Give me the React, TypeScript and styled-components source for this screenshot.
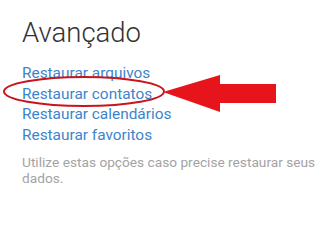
import styled, { createGlobalStyle } from "styled-components";

const GlobalStyle = createGlobalStyle`
  html, body {
    margin: 0;
    padding: 0;
    background: #ffffff;
  }
  body {
    font-family: "Roboto", "Liberation Sans", sans-serif;
  }
`;

const StyledPage = styled.div`
  position: relative;
  width: 332px;
  height: 213px;
  padding: 15px 0 0 22px;
  box-sizing: border-box;
  overflow: hidden;
`;

const StyledTitle = styled.h1`
  margin: 0 0 12px;
  font-size: 27.5px;
  font-weight: 300;
  line-height: 36px;
  color: #333333;
`;

const StyledLinks = styled.ul`
  list-style: none;
  margin: 0 0 9px;
  padding: 0;
`;

const StyledLink = styled.li`
  font-size: 15.4px;
  line-height: 20.5px;
  color: #3d84cc;
`;

const StyledNote = styled.p`
  margin: 0;
  width: 305px;
  font-size: 13.7px;
  line-height: 16px;
  color: #a3a3a3;
`;

const StyledMarkup = styled.svg`
  position: absolute;
  left: 0;
  top: 0;
  pointer-events: none;
`;

const links = [
  "Restaurar arquivos",
  "Restaurar contatos",
  "Restaurar calendários",
  "Restaurar favoritos",
];

export default function App() {
  return (
    <>
      <GlobalStyle />
      <StyledPage>
        <StyledTitle>Avançado</StyledTitle>
        <StyledLinks>
          {links.map((l) => (
            <StyledLink key={l}>{l}</StyledLink>
          ))}
        </StyledLinks>
        <StyledNote>
          Utilize estas opções caso precise restaurar seus dados.
        </StyledNote>
        <StyledMarkup width="332" height="213" viewBox="0 0 332 213">
          <ellipse
            cx="84"
            cy="91.5"
            rx="80"
            ry="14.5"
            fill="none"
            stroke="#c8141c"
            strokeWidth="2"
          />
          <polygon
            points="163,92 220,75 220,84 276,84 276,103 220,103 220,112"
            fill="#e8141c"
          />
        </StyledMarkup>
      </StyledPage>
    </>
  );
}
